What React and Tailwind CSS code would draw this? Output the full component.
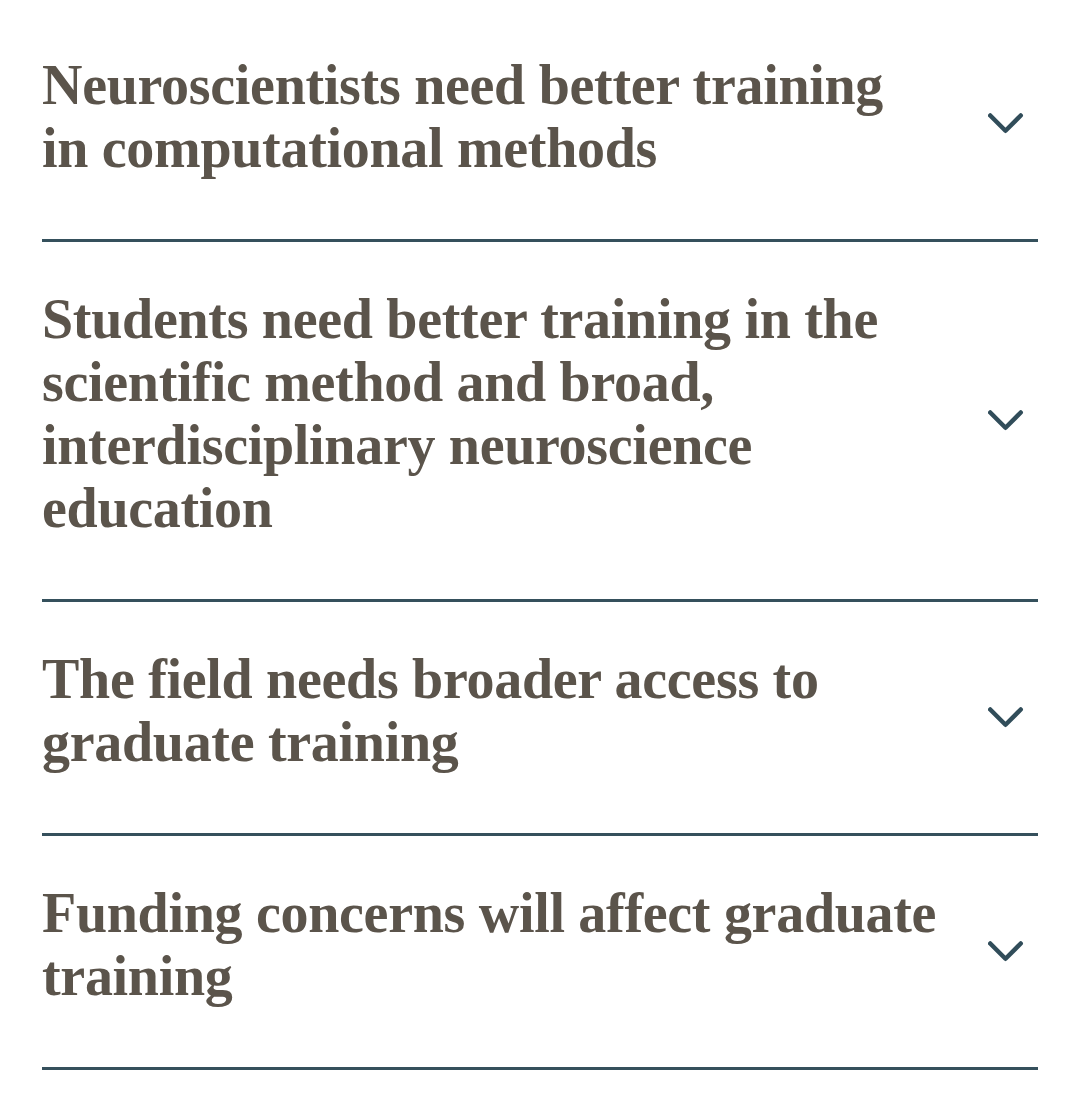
import React from 'react';

const topics = [
  'Neuroscientists need better training in computational methods',
  'Students need better training in the scientific method and broad, interdisciplinary neuroscience education',
  'The field needs broader access to graduate training',
  'Funding concerns will affect graduate training',
];

const Chevron = () => (
  <svg className="mt-[13px] mr-[14px] shrink-0" width="36" height="21" viewBox="0 0 36 21" fill="none">
    <path d="M2.25 2.5L17.5 17.75L32.75 2.5" stroke="#314d5a" strokeWidth="4.5" strokeLinecap="round" strokeLinejoin="round" />
  </svg>
);

const App = () => {
  return (
    <div className="min-h-screen bg-white px-[42px] pt-[8px]">
      {topics.map((t) => (
        <button
          key={t}
          className="w-full flex items-center justify-between pt-[46px] pb-[59px] border-b-[3px] border-[#35505c] text-left"
        >
          <span className="w-[900px] font-['Liberation_Serif',serif] font-bold text-[56px] leading-[63px] tracking-[-0.3px] text-[#5b544b]">
            {t}
          </span>
          <Chevron />
        </button>
      ))}
    </div>
  );
};

export default App;
